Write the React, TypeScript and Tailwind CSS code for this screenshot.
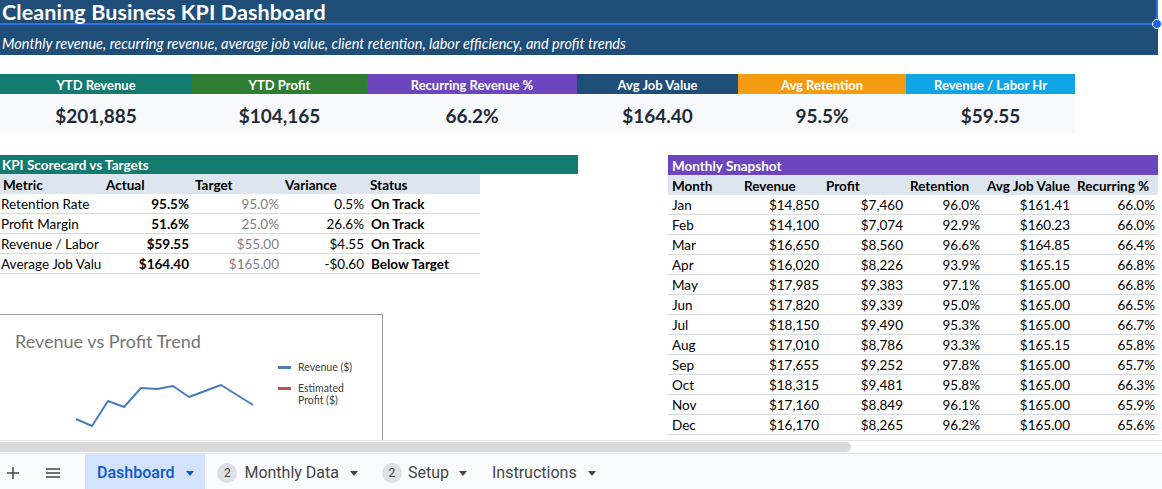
import React from "react";

const kpis = [
  { label: "YTD Revenue", value: "$201,885", width: "w-[192px]", color: "bg-[#127a6e]" },
  { label: "YTD Profit", value: "$104,165", width: "w-[175px]", color: "bg-[#2e7d32]" },
  { label: "Recurring Revenue %", value: "66.2%", width: "w-[210px]", color: "bg-[#6d45bf]" },
  { label: "Avg Job Value", value: "$164.40", width: "w-[161px]", color: "bg-[#1f4e79]" },
  { label: "Avg Retention", value: "95.5%", width: "w-[168px]", color: "bg-[#f39c12]" },
  { label: "Revenue / Labor Hr", value: "$59.55", width: "w-[169px]", color: "bg-[#12a5e5]" },
];

const scorecard = [
  ["Retention Rate", "95.5%", "95.0%", "0.5%", "On Track"],
  ["Profit Margin", "51.6%", "25.0%", "26.6%", "On Track"],
  ["Revenue / Labor", "$59.55", "$55.00", "$4.55", "On Track"],
  ["Average Job Valu", "$164.40", "$165.00", "-$0.60", "Below Target"],
];

const months = [
  ["Jan", "$14,850", "$7,460", "96.0%", "$161.41", "66.0%"],
  ["Feb", "$14,100", "$7,074", "92.9%", "$160.23", "66.0%"],
  ["Mar", "$16,650", "$8,560", "96.6%", "$164.85", "66.4%"],
  ["Apr", "$16,020", "$8,226", "93.9%", "$165.15", "66.8%"],
  ["May", "$17,985", "$9,383", "97.1%", "$165.00", "66.8%"],
  ["Jun", "$17,820", "$9,339", "95.0%", "$165.00", "66.5%"],
  ["Jul", "$18,150", "$9,490", "95.3%", "$165.00", "66.7%"],
  ["Aug", "$17,010", "$8,786", "93.3%", "$165.15", "65.8%"],
  ["Sep", "$17,655", "$9,252", "97.8%", "$165.00", "65.7%"],
  ["Oct", "$18,315", "$9,481", "95.8%", "$165.00", "66.3%"],
  ["Nov", "$17,160", "$8,849", "96.1%", "$165.00", "65.9%"],
  ["Dec", "$16,170", "$8,265", "96.2%", "$165.00", "65.6%"],
];

const scoreCols = ["w-[103px]", "w-[89px]", "w-[90px]", "w-[85px]", "w-[113px]"];
const monthCols = ["w-[72px]", "w-[82px]", "w-[84px]", "w-[77px]", "w-[90px]", "w-[85px]"];

const trend = "76,104 92,111 108,86 124,92 141,73 157,74 173,71 189,82 205,76 221,70 237,80 253,90";

function Caret() {
  return (
    <svg width="8" height="5" viewBox="0 0 8 5" className="shrink-0">
      <path d="M0 0h8L4 5z" fill="currentColor" />
    </svg>
  );
}

function Badge() {
  return (
    <span className="flex h-[20px] w-[20px] items-center justify-center rounded-full bg-[#dde1e6] text-[12px] text-[#3c4043]">
      2
    </span>
  );
}

export default function App() {
  return (
    <div className="flex h-[489px] w-[1162px] flex-col overflow-hidden bg-white font-[Lato,sans-serif] text-[13.5px] leading-[16px] text-black">
      {/* title block */}
      <div className="w-[1158px] shrink-0 bg-[#1f4e79] text-white">
        <div className="relative flex h-[25px] items-center border-b-2 border-r-2 border-[#2f72e4] pl-[2px]">
          <h1 className="text-[21.5px] font-bold leading-[22px] tracking-[0.1px]">Cleaning Business KPI Dashboard</h1>
          <span className="absolute -bottom-[6px] -right-[6px] h-[10px] w-[10px] rounded-full border border-white bg-[#1a66e0]" />
        </div>
        <div className="flex h-[30px] items-end pb-[3px] pl-[2px]">
          <p className="text-[14.5px] italic leading-[17px]">
            Monthly revenue, recurring revenue, average job value, client retention, labor efficiency, and profit trends
          </p>
        </div>
      </div>

      {/* KPI tiles */}
      <div className="mt-[19px] flex shrink-0">
        {kpis.map((k) => (
          <div key={k.label} className={`${k.width} flex flex-col`}>
            <div className={`${k.color} flex h-[20px] items-end justify-center pb-[1px] text-[13px] font-bold text-white`}>
              {k.label}
            </div>
            <div className="flex h-[40px] items-center justify-center bg-[#f8f9fb] pt-[3px] text-[19px] font-bold text-[#1f2937]">
              {k.value}
            </div>
          </div>
        ))}
      </div>

      {/* tables */}
      <div className="mt-[21px] flex h-[285px] shrink-0 overflow-hidden">
        <div className="flex w-[578px] flex-col">
          <div className="flex h-[20px] items-end bg-[#127a6e] pb-[1px] pl-[2px] font-bold text-white">KPI Scorecard vs Targets</div>
          <div className="w-[480px]">
            <div className="flex h-[20px] items-end bg-[#dde5ef] pb-[1px] font-bold">
              {["Metric", "Actual", "Target", "Variance", "Status"].map((h, i) => (
                <div key={h} className={`${scoreCols[i]} pl-[3px]`}>{h}</div>
              ))}
            </div>
            {scorecard.map((r) => (
              <div key={r[0]} className="flex h-[20px] items-end border-b border-[#d5d9df] pb-[1px]">
                <div className={`${scoreCols[0]} whitespace-nowrap pl-[1px]`}>{r[0]}</div>
                <div className={`${scoreCols[1]} pr-[3px] text-right font-bold`}>{r[1]}</div>
                <div className={`${scoreCols[2]} pr-[3px] text-right text-[#7f7f7f]`}>{r[2]}</div>
                <div className={`${scoreCols[3]} pr-[3px] text-right`}>{r[3]}</div>
                <div className={`${scoreCols[4]} pl-[4px] font-bold`}>{r[4]}</div>
              </div>
            ))}
          </div>

          {/* chart */}
          <div className="relative mt-[40px] h-[130px] w-[383px] border-t border-r border-[#9e9e9e]">
            <div className="pl-[15px] pt-[14px] text-[18px] leading-[24px] text-[#757575]">Revenue vs Profit Trend</div>
            <svg className="absolute inset-0" width="383" height="130">
              <polyline points={trend} fill="none" stroke="#4a7ebb" strokeWidth="2" strokeLinejoin="round" />
            </svg>
            <div className="absolute left-[278px] top-[46px] flex flex-col gap-[9px] text-[10.5px] leading-[12px] text-[#404040]">
              <div className="flex items-center gap-[7px]">
                <span className="h-[3px] w-[13px] bg-[#4a7ebb]" />
                <span>Revenue ($)</span>
              </div>
              <div className="flex items-start gap-[7px]">
                <span className="mt-[5px] h-[3px] w-[13px] bg-[#c0504d]" />
                <span>
                  Estimated
                  <br />
                  Profit ($)
                </span>
              </div>
            </div>
          </div>
        </div>

        <div className="ml-[90px] flex w-[490px] flex-col">
          <div className="flex h-[20px] items-end bg-[#6d45bf] pb-[1px] pl-[4px] font-bold text-white">Monthly Snapshot</div>
          <div className="flex h-[20px] items-end bg-[#dde5ef] pb-[1px] font-bold">
            {["Month", "Revenue", "Profit", "Retention", "Avg Job Value", "Recurring %"].map((h, i) => (
              <div key={h} className={`${monthCols[i]} whitespace-nowrap pl-[4px]`}>{h}</div>
            ))}
          </div>
          {months.map((m) => (
            <div key={m[0]} className="flex h-[20px] items-end border-b border-[#d5d9df] pb-[1px]">
              <div className={`${monthCols[0]} pl-[4px]`}>{m[0]}</div>
              {m.slice(1).map((v, i) => (
                <div key={i} className={`${monthCols[i + 1]} pr-[3px] text-right`}>{v}</div>
              ))}
            </div>
          ))}
        </div>
      </div>

      {/* horizontal scrollbar */}
      <div className="flex h-[14px] shrink-0 items-center border-y border-[#e1e3e1] bg-white">
        <div className="h-[10px] w-[851px] rounded-r-[5px] bg-[#dadada]" />
      </div>

      {/* sheet tabs */}
      <div className="flex flex-1 items-stretch bg-[#f9fbfd] pt-[3px] font-[Roboto,sans-serif] text-[16px] leading-[20px] text-[#444746]">
        <div className="flex w-[26px] items-center justify-center">
          <svg width="12" height="12" viewBox="0 0 12 12">
            <path d="M6 0v12M0 6h12" stroke="#444746" strokeWidth="1.5" />
          </svg>
        </div>
        <div className="flex w-[54px] items-center justify-center">
          <svg width="14" height="10" viewBox="0 0 14 10">
            <path d="M0 1h14M0 5h14M0 9h14" stroke="#444746" strokeWidth="1.5" />
          </svg>
        </div>
        <div className="-mt-[3px] ml-[5px] flex items-center gap-[12px] bg-[#d3e3fd] pl-[12px] pr-[11px] pt-[3px] font-medium text-[#0b57d0]">
          <span>Dashboard</span>
          <Caret />
        </div>
        <div className="flex items-center gap-[7px] pl-[12px] pr-[12px]">
          <Badge />
          <span>Monthly Data</span>
          <span className="ml-[4px]"><Caret /></span>
        </div>
        <div className="flex items-center gap-[6px] pl-[12px] pr-[13px]">
          <Badge />
          <span>Setup</span>
          <span className="ml-[4px]"><Caret /></span>
        </div>
        <div className="flex items-center gap-[11px] pl-[12px]">
          <span>Instructions</span>
          <Caret />
        </div>
      </div>
    </div>
  );
}
